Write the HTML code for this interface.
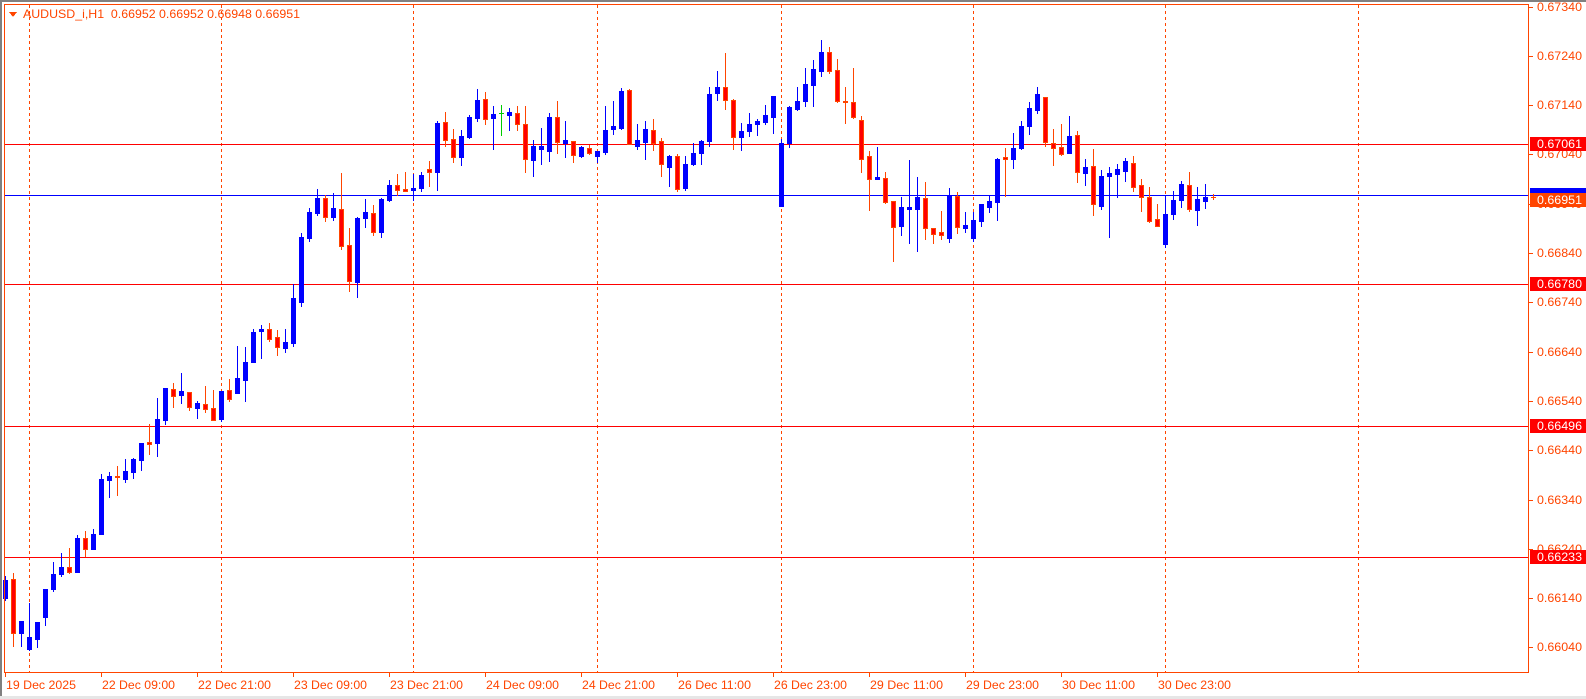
<!DOCTYPE html>
<html><head><meta charset="utf-8"><style>
html,body{margin:0;padding:0;background:#fff;width:1586px;height:699px;overflow:hidden}
svg{display:block}
text{font-family:"Liberation Sans",sans-serif;font-size:12px;white-space:pre}
</style></head><body>
<svg id="s" width="1586" height="699" xmlns="http://www.w3.org/2000/svg" shape-rendering="crispEdges">
<rect x="0" y="0" width="1586" height="699" fill="#fff"/>
<rect x="0" y="0" width="1586" height="2" fill="#808080"/>
<rect x="0" y="0" width="2" height="699" fill="#808080"/>
<rect x="0" y="696" width="1586" height="3" fill="#e6e6e6"/>
<g id="grid" stroke="#ff4500" stroke-width="1" stroke-dasharray="3,3"></g>
<g id="hl"></g>
<g id="candles"></g>
<rect x="4.5" y="4.5" width="1524" height="668" fill="none" stroke="#ff4500" stroke-width="1"/>
<g id="axis" fill="#ff4500"></g>
<polygon points="9,12 17,12 13,17" fill="#ff4500"/>
<text x="23" y="18" fill="#ff4500" textLength="277" lengthAdjust="spacingAndGlyphs">AUDUSD_i,H1&#160;&#160;0.66952 0.66952 0.66948 0.66951</text>
</svg>
<script>
var NS="http://www.w3.org/2000/svg";
function el(p,t,a,txt){var e=document.createElementNS(NS,t);for(var k in a)e.setAttribute(k,a[k]);if(txt!==undefined)e.textContent=txt;p.appendChild(e);return e;}
var grid=document.getElementById('grid');
[29,221,413,597,781,973,1165,1358].forEach(function(x){el(grid,'line',{x1:x+.5,y1:5,x2:x+.5,y2:673});});
var hl=document.getElementById('hl');
[[144,'#ff0000'],[284,'#ff0000'],[426,'#ff0000'],[557,'#ff0000'],[195,'#0000ff']].forEach(function(a){el(hl,'line',{x1:5,y1:a[0]+.5,x2:1529,y2:a[0]+.5,stroke:a[1],'stroke-width':1});});
var D=`b 580 598 576 600
r 579 633 573 646
b 621 633 621 646
b 637 649 603 650
b 622 639 622 647
b 589 617 589 625
b 574 589 562 591
b 567 574 553 576
r 567 572 548 573
b 538 572 535 572
r 538 549 531 556
b 534 549 529 549
b 479 534 474 534
b 476 480 472 497
r 476 477 466 495
b 471 479 459 482
b 459 472 458 478
b 443 460 443 470
r 442 444 424 454
b 419 443 398 456
b 388 420 388 424
r 389 396 383 407
b 391 395 373 403
r 392 407 392 410
b 403 408 401 418
r 404 409 386 412
r 408 420 390 420
b 391 419 391 421
r 390 399 379 401
b 378 393 346 393
b 362 380 347 401
b 332 362 329 362
b 329 331 325 358
r 329 339 323 341
r 337 347 330 355
b 342 348 329 352
b 298 343 284 346
b 237 302 233 306
b 212 238 208 241
b 198 213 189 215
r 198 217 195 221
b 208 217 193 220
r 209 246 173 249
r 245 281 228 291
b 218 282 217 297
b 212 218 199 227
r 213 232 205 235
b 199 232 198 237
b 185 200 180 201
r 185 190 174 195
r 189 191 172 191
b 188 190 174 200
b 175 188 172 191
r 169 172 161 186
b 123 172 121 190
r 122 140 112 146
r 139 157 129 162
b 136 157 130 165
b 117 137 115 138
b 100 118 89 121
r 99 119 92 124
b 114 118 106 149
g 113 113 105 135
b 112 115 108 130
r 113 124 106 130
r 124 159 106 172
b 146 160 140 176
b 146 149 128 164
b 117 151 113 161
r 117 142 101 153
b 140 143 121 157
r 141 155 141 162
b 147 156 146 157
r 148 153 145 154
b 151 156 151 162
b 130 152 106 154
b 126 129 101 134
b 91 128 88 129
r 90 144 89 144
b 140 146 124 149
b 129 142 121 159
r 130 143 119 150
r 141 164 138 176
b 156 167 155 186
r 156 189 154 191
b 164 188 156 190
b 153 164 143 165
b 141 153 140 164
b 94 141 87 146
b 87 93 71 100
r 87 100 53 109
r 100 137 99 149
b 131 137 123 150
b 124 131 113 136
b 121 124 119 135
b 115 122 105 124
b 96 117 96 133
b 143 206 139 206
b 107 143 106 147
b 101 109 87 110
b 84 101 68 106
b 69 85 60 106
b 52 71 40 76
r 52 71 47 73
r 70 101 59 102
r 101 102 87 123
r 102 117 68 118
r 120 159 116 172
r 156 179 151 210
b 177 179 147 179
r 178 202 172 203
r 201 227 201 261
b 207 226 197 235
b 207 209 160 243
b 197 209 177 251
r 198 228 182 239
r 228 234 228 243
r 232 235 211 239
b 196 238 188 242
r 196 227 192 233
b 225 228 212 232
b 220 238 212 241
b 204 221 204 226
b 201 207 196 212
b 159 202 158 220
r 157 159 148 196
b 148 159 133 168
b 126 148 121 149
b 108 126 102 134
b 94 110 87 113
r 97 142 97 146
r 143 148 129 165
r 147 154 124 155
b 136 153 116 153
r 135 172 131 182
b 167 173 159 185
r 166 204 149 215
b 176 206 170 209
b 173 176 167 237
b 169 174 164 197
b 161 171 158 181
r 163 187 156 191
r 185 197 179 211
r 197 221 187 222
r 219 226 204 226
b 214 244 196 247
b 200 214 191 219
b 184 200 181 207
r 185 209 172 211
b 199 210 187 225
b 197 201 184 208
r 197 197 194 199`;
var cg=document.getElementById('candles');
D.split('\n').forEach(function(line,k){
  var p=line.trim().split(/\s+/);var t=p[0],top=+p[1],bot=+p[2],hi=+p[3],lo=+p[4];
  var cx=5+8*k;
  var wc=t=='b'?'#0000ff':(t=='g'?'#00cc00':'#ff4500');
  el(cg,'rect',{x:cx,y:hi,width:1,height:Math.max(1,lo-hi+1),fill:wc});
  if(t=='b'){el(cg,'rect',{x:cx-2,y:top,width:5,height:Math.max(1,bot-top+1),fill:'#0000ff'});}
  else if(t=='g'){el(cg,'rect',{x:cx-2,y:top,width:5,height:1,fill:'#00cc00'});}
  else{ if(bot-top<2){el(cg,'rect',{x:cx-2,y:top,width:5,height:Math.max(1,bot-top+1),fill:'#ff4500'});}
    else el(cg,'rect',{x:cx-1.5,y:top+.5,width:4,height:bot-top,fill:'#ff0000',stroke:'#ff4500','stroke-width':1});}
});
var ax=document.getElementById('axis');
var prices=['0.67340','0.67240','0.67140','0.67040','0.66940','0.66840','0.66740','0.66640','0.66540','0.66440','0.66340','0.66240','0.66140','0.66040'];
prices.forEach(function(p,i){var y=Math.round(6.5+49.3*i);el(ax,'rect',{x:1529,y:y,width:4,height:1});el(ax,'text',{x:1537,y:y+4,textLength:45,lengthAdjust:'spacingAndGlyphs'},p);});
var labs=['19 Dec 2025','22 Dec 09:00','22 Dec 21:00','23 Dec 09:00','23 Dec 21:00','24 Dec 09:00','24 Dec 21:00','26 Dec 11:00','26 Dec 23:00','29 Dec 11:00','29 Dec 23:00','30 Dec 11:00','30 Dec 23:00'];
labs.forEach(function(l,i){var x=5+96*i;el(ax,'rect',{x:x,y:673,width:1,height:4});el(ax,'text',{x:x+1,y:689,textLength:(i==0?70:73),lengthAdjust:'spacingAndGlyphs'},l);});
function box(y,col,txt){el(ax,'rect',{x:1530,y:y-7,width:56,height:14,fill:col});el(ax,'text',{x:1537,y:y+4,fill:'#fff',textLength:45,lengthAdjust:'spacingAndGlyphs'},txt);}
box(144,'#ff0000','0.67061');box(284,'#ff0000','0.66780');box(426,'#ff0000','0.66496');box(557,'#ff0000','0.66233');
el(ax,'rect',{x:1530,y:188,width:56,height:10,fill:'#0000ff'});
box(200,'#ff4500','0.66951');
</script>
</body></html>
